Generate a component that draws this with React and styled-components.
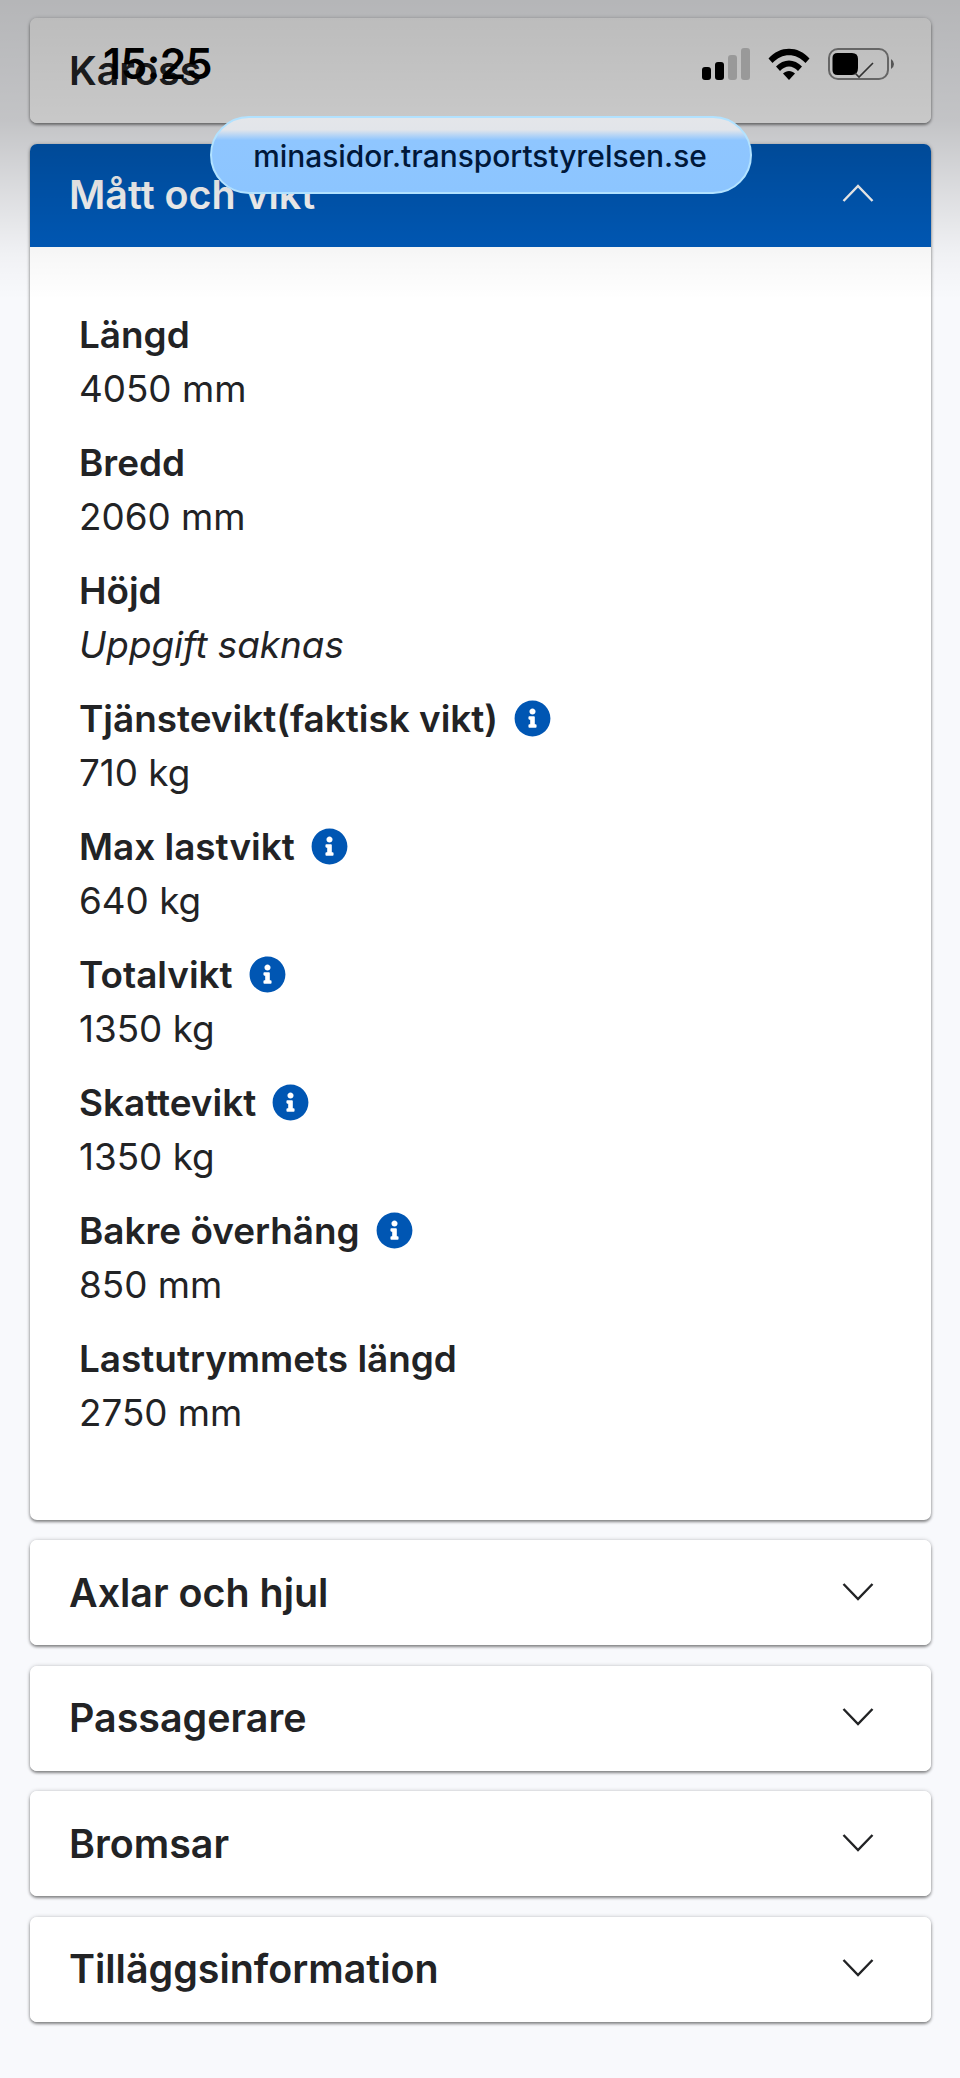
import React from 'react'
import styled, { createGlobalStyle } from 'styled-components'
import { FaInfoCircle } from 'react-icons/fa'

const GlobalStyle = createGlobalStyle`
  html, body {
    margin: 0;
    padding: 0;
    background: #f8f9fc;
  }
  * {
    box-sizing: border-box;
  }
`

const Page = styled.div`
  position: relative;
  width: 960px;
  height: 2078px;
  overflow: hidden;
  padding: 18px 29px 0 30px;
  display: flex;
  flex-direction: column;
  font-family: Inter, "Noto Sans", sans-serif;
  color: #222325;
  background: #f8f9fc;
`

const Accordion = styled.section`
  background: #fff;
  border-radius: 7px;
  box-shadow: 0 2px 3px rgba(0, 0, 0, 0.42), 0 0 4px rgba(0, 0, 0, 0.2);
  margin-bottom: 20.5px;
  overflow: hidden;
`

const AccordionHeader = styled.div`
  height: ${(p) => (p.$open ? '103px' : '105px')};
  padding: 0 39px 0 40px;
  display: flex;
  align-items: center;
  justify-content: space-between;
  background: ${(p) => (p.$open ? '#005ab9' : '#fff')};
  color: ${(p) => (p.$open ? '#fff' : '#222325')};
`

const AccordionTitle = styled.h2`
  margin: 0 0 0 -1px;
  font-size: 39.4px;
  line-height: 48px;
  font-weight: 600;
`

const Chevron = styled.svg`
  width: 32px;
  height: 18px;
  margin: ${(p) => (p.$up ? '-4px' : '-2px')} 18px 0 0;
  fill: none;
  stroke: currentColor;
  stroke-width: 2.4;
`

const AccordionBody = styled.div`
  padding: 61px 48px 82px 49px;
  height: 1273px;
`

const Row = styled.div`
  margin-bottom: 21px;
`

const Label = styled.div`
  display: flex;
  align-items: center;
  gap: 16px;
  font-size: 36.9px;
  line-height: 54px;
  font-weight: 600;
`

const Value = styled.div`
  font-size: 36.8px;
  line-height: 53px;
  font-weight: 400;
  font-style: ${(p) => (p.$missing ? 'italic' : 'normal')};
`

const InfoIcon = styled(FaInfoCircle)`
  width: 37px;
  height: 37px;
  color: #0056b3;
`

const TopShade = styled.div`
  position: absolute;
  top: 0;
  left: 0;
  right: 0;
  height: 300px;
  pointer-events: none;
  background: linear-gradient(
    to bottom,
    rgba(0, 0, 0, 0.27) 0%,
    rgba(0, 0, 0, 0.215) 40%,
    rgba(0, 0, 0, 0.11) 65%,
    rgba(0, 0, 0, 0.03) 85%,
    rgba(0, 0, 0, 0) 100%
  );
`

const StatusBar = styled.div`
  position: absolute;
  top: 44px;
  left: 103px;
  right: 65px;
  height: 40px;
  display: flex;
  align-items: center;
  justify-content: space-between;
  color: #000;
`

const Clock = styled.span`
  font-size: 42.5px;
  line-height: 40px;
  font-weight: 600;
  letter-spacing: -0.5px;
`

const StatusIcons = styled.div`
  display: flex;
  align-items: center;
  gap: 18px;
`

const StatusIcon = styled.svg`
  display: block;
  width: ${(p) => p.$w}px;
  height: 32px;
`

const UrlPill = styled.div`
  position: absolute;
  top: 116px;
  left: 210px;
  width: 542px;
  height: 78px;
  border-radius: 39px;
  display: flex;
  align-items: center;
  justify-content: center;
  padding: 2px 2px 0 0;
  font-size: 29.9px;
  font-weight: 500;
  color: #00183a;
  background: linear-gradient(to bottom, #e4e6ea 0%, #e2e5ea 16%, #8fc6ff 30%, #8cc5ff 100%);
  border: 2px solid #b2e2ff;
`

const SECTIONS = ['Axlar och hjul', 'Passagerare', 'Bromsar', 'Tilläggsinformation']

const MEASURES = [
  { label: 'Längd', value: '4050 mm' },
  { label: 'Bredd', value: '2060 mm' },
  { label: 'Höjd', value: 'Uppgift saknas', missing: true },
  { label: 'Tjänstevikt(faktisk vikt)', value: '710 kg', info: true },
  { label: 'Max lastvikt', value: '640 kg', info: true },
  { label: 'Totalvikt', value: '1350 kg', info: true },
  { label: 'Skattevikt', value: '1350 kg', info: true },
  { label: 'Bakre överhäng', value: '850 mm', info: true },
  { label: 'Lastutrymmets längd', value: '2750 mm' },
]

function ChevronIcon({ up }) {
  return (
    <Chevron $up={up} viewBox="0 0 32 18">
      <path d={up ? 'M1.5 17 L16 2 L30.5 17' : 'M1.5 1 L16 16 L30.5 1'} />
    </Chevron>
  )
}

function Signal() {
  return (
    <StatusIcon $w={48} viewBox="0 0 48 32">
      <rect x="0" y="19" width="9" height="13" rx="3" fill="#000" />
      <rect x="13" y="14" width="9" height="18" rx="3" fill="#000" />
      <rect x="26" y="7" width="9" height="25" rx="3" fill="#999" />
      <rect x="39" y="0" width="9" height="32" rx="3" fill="#999" />
    </StatusIcon>
  )
}

function Wifi() {
  return (
    <StatusIcon $w={42} viewBox="0 0 42 32">
      <path d="M0.5 10.5 C12 -2.5 30 -2.5 41.5 10.5 L37.5 15 C28 4.5 14 4.5 4.5 15 Z" fill="#000" />
      <path d="M8 18.5 C15.5 10.5 26.5 10.5 34 18.5 L30 23 C24.5 17 17.5 17 12 23 Z" fill="#000" />
      <path d="M15 25.5 C18.5 22 23.5 22 27 25.5 L21 32 Z" fill="#000" />
    </StatusIcon>
  )
}

function Battery() {
  return (
    <StatusIcon $w={67} viewBox="0 0 67 32">
      <rect x="1" y="1" width="59" height="30" rx="9" fill="none" stroke="#666" strokeWidth="2" />
      <path d="M4.5 10 Q4.5 5 9.5 5 H24 Q30 5 30 11 V20 Q30 27 24 27 H9.5 Q4.5 27 4.5 22 Z" fill="#000" />
      <path d="M27 25 L31 29 L45 15" fill="none" stroke="#333" strokeWidth="1.6" />
      <path d="M63 11 Q66 13 66 16 Q66 19 63 21 Z" fill="#555" />
    </StatusIcon>
  )
}

export default function App() {
  return (
    <Page>
      <GlobalStyle />
      <Accordion>
        <AccordionHeader>
          <AccordionTitle>Kaross</AccordionTitle>
        </AccordionHeader>
      </Accordion>
      <Accordion>
        <AccordionHeader $open>
          <AccordionTitle>Mått och vikt</AccordionTitle>
          <ChevronIcon up />
        </AccordionHeader>
        <AccordionBody>
          {MEASURES.map(({ label, value, info, missing }) => (
            <Row key={label}>
              <Label>
                {label}
                {info && <InfoIcon />}
              </Label>
              <Value $missing={missing}>{value}</Value>
            </Row>
          ))}
        </AccordionBody>
      </Accordion>
      {SECTIONS.map((name) => (
        <Accordion key={name}>
          <AccordionHeader>
            <AccordionTitle>{name}</AccordionTitle>
            <ChevronIcon />
          </AccordionHeader>
        </Accordion>
      ))}
      <TopShade />
      <StatusBar>
        <Clock>15:25</Clock>
        <StatusIcons>
          <Signal />
          <Wifi />
          <Battery />
        </StatusIcons>
      </StatusBar>
      <UrlPill>minasidor.transportstyrelsen.se</UrlPill>
    </Page>
  )
}
